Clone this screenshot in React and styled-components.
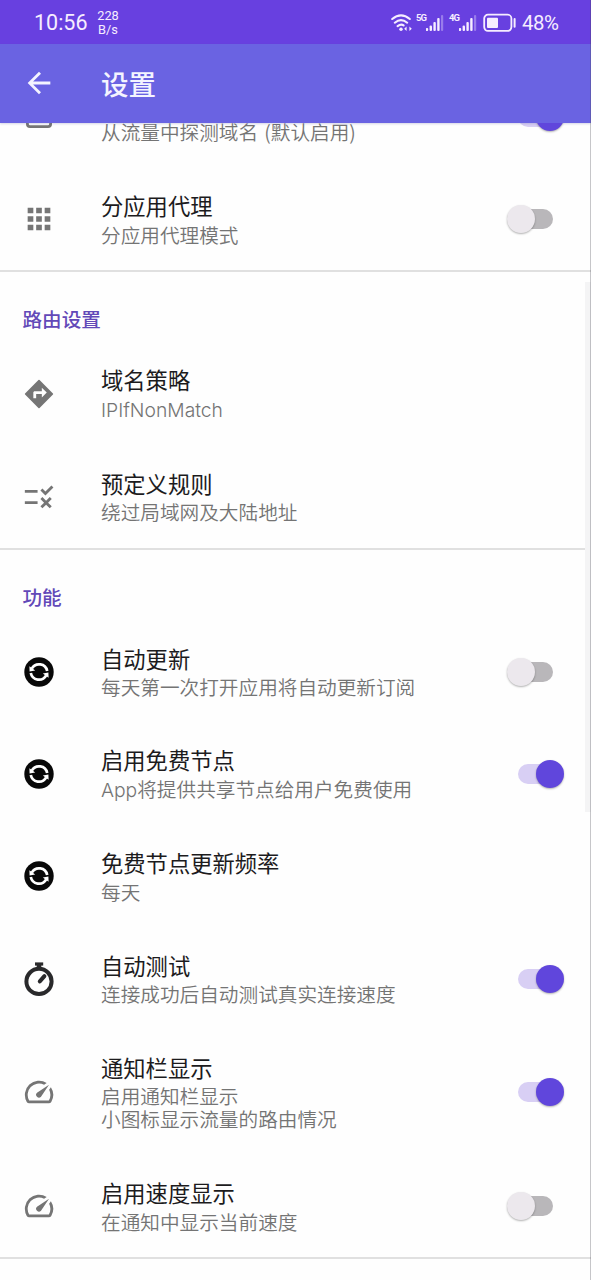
import React from "react";
import styled, { createGlobalStyle, css } from "styled-components";
import { MdApps, MdArrowBack, MdRule, MdSpeed } from "react-icons/md";

const Global = createGlobalStyle`
  * { box-sizing: border-box; }
  body { margin: 0; background: #fefefe; font-family: "Noto Sans CJK SC", sans-serif; overflow: hidden; }
  svg { display: block; }
`;

const Screen = styled.div`
  position: relative;
  width: 591px;
  height: 1280px;
  display: flex;
  flex-direction: column;
  overflow: hidden;
  background: #fefefe;
`;

const StatusBar = styled.header`
  flex: none;
  height: 44px;
  padding: 2px 31px 0 34px;
  display: flex;
  align-items: center;
  background: #6840e0;
  color: #f6edff;
  font-family: Roboto, sans-serif;
`;

const Clock = styled.span`
  width: 62px;
  font-size: 21.5px;
  line-height: 26px;
  white-space: nowrap;
`;

const NetSpeed = styled.span`
  width: 24px;
  display: flex;
  flex-direction: column;
  align-items: center;
  font-size: 12.8px;
  line-height: 14.5px;
`;

const StatusIcons = styled.div`
  margin-left: auto;
  display: flex;
  align-items: center;
`;

const BatteryText = styled.span`
  margin-left: 5px;
  width: 38px;
  font-size: 20.4px;
  letter-spacing: -0.4px;
  white-space: nowrap;
`;

const AppBar = styled.div`
  flex: none;
  height: 78.5px;
  padding-left: 22px;
  display: flex;
  align-items: center;
  gap: 45px;
  background: #6a63e2;
  color: #f4f4ff;
  box-shadow: 0 1px 2px rgba(90, 90, 160, 0.25);
  z-index: 1;
`;

const AppTitle = styled.h1`
  margin: 0;
  font-size: 27.5px;
  line-height: 40px;
  font-weight: 500;
`;

const Viewport = styled.main`
  flex: 1;
  min-height: 0;
  overflow: hidden;
`;

const List = styled.div`
  margin-top: -56.8px;
`;

const Group = styled.section`
  border-bottom: 2px solid #e0e0e0;
`;

const GroupTitle = styled.h2`
  margin: 0;
  height: 71px;
  padding: 24px 0 0 22.5px;
  font-size: 19.6px;
  line-height: 46px;
  font-weight: 500;
  color: #6249b8;
`;

const Row = styled.div`
  height: ${(p) => (p.$tall ? 125.4 : 102.25)}px;
  padding: 0 27.5px 0 22px;
  display: flex;
  align-items: center;
`;

const IconSlot = styled.div`
  flex: none;
  width: 79px;
  color: #757575;
`;

const Texts = styled.div`
  flex: 1;
  padding-bottom: 2.4px;
  display: flex;
  flex-direction: column;
  gap: 2.5px;
  white-space: nowrap;
`;

const Title = styled.div`
  min-height: 30px;
  font-size: 22.3px;
  line-height: 30px;
  color: #1c1b1d;
`;

const Summary = styled.div`
  font-size: 19.65px;
  line-height: 23px;
  font-weight: 350;
  color: #747474;
  word-spacing: 1.8px;
  white-space: pre-line;
`;

const Latin = styled.span`
  font-family: Inter, sans-serif;
  font-weight: 300;
  font-size: 19.3px;
`;

const Toggle = styled.div`
  flex: none;
  width: ${(p) => (p.$on ? 46 : 56.5)}px;
  height: 28px;
  display: flex;
  align-items: center;

  &::before {
    content: "";
    width: 28px;
    height: 28px;
    border-radius: 50%;
    background: #ece8ed;
    box-shadow: 0 1px 2px rgba(0, 0, 0, 0.3);
    z-index: 1;
  }

  &::after {
    content: "";
    width: 32px;
    height: 20px;
    margin-left: -14px;
    border-radius: 10px;
    background: #b9b7ba;
  }

  ${(p) =>
    p.$on &&
    css`
      flex-direction: row-reverse;

      &::before {
        background: #6046dc;
      }

      &::after {
        margin: 0 -14px 0 0;
        background: #d8cff4;
      }
    `}
`;

const ScrollThumb = styled.div`
  position: absolute;
  top: 282px;
  right: 0;
  width: 6px;
  height: 530px;
  background: #f4f4f5;
`;

const ScreenEdge = styled.div`
  position: absolute;
  inset: 0 0 0 auto;
  width: 1px;
  background: rgba(70, 70, 80, 0.3);
  z-index: 2;
`;

const Wifi = () => (
  <svg width="21" height="20" viewBox="0 0 21 20" fill="none" stroke="currentColor" strokeWidth="2.1" strokeLinecap="round">
    <path d="M1.2 6Q10 -1.4 18.8 6M3.8 9.7Q10 4.6 16.2 9.7M6.6 13.2Q10 10.6 12.6 12.4" />
    <circle cx="10" cy="16.3" r="1.7" fill="currentColor" stroke="none" />
    <path d="M13.2 15.8l2.4-2.3v4.6zM20.8 15.8l-2.4-2.3v4.6z" fill="currentColor" stroke="none" />
  </svg>
);

const SignalWrap = styled.div`
  display: flex;
  margin-left: ${(p) => p.$gap}px;
`;

const SignalLabel = styled.span`
  width: 10px;
  font-size: 9.5px;
  line-height: 7px;
  font-weight: 700;
  letter-spacing: -1px;
`;

const Signal = ({ label, gap }) => (
  <SignalWrap $gap={gap}>
    <SignalLabel>{label}</SignalLabel>
    <svg width="18" height="18" viewBox="0 0 18 18" fill="currentColor">
      <rect x="-.2" y="14" width="2.4" height="3" rx="1" />
      <rect x="3.6" y="11.5" width="2.4" height="5.5" rx="1" />
      <rect x="7.4" y="8" width="2.4" height="9" rx="1" />
      <rect x="11.2" y="4" width="2.4" height="13" rx="1" />
      <rect x="15" y="1" width="2.2" height="16" rx="1" opacity=".35" />
    </svg>
  </SignalWrap>
);

const BatterySvg = styled.svg`
  margin-left: 6px;
`;

const Battery = () => (
  <BatterySvg width="34" height="20" viewBox="0 0 34 20">
    <rect x="1.2" y="1.7" width="27.2" height="16.2" rx="3.8" fill="none" stroke="currentColor" strokeWidth="1.8" />
    <rect x="4" y="4.7" width="11" height="10.3" rx="1" fill="currentColor" />
    <path d="M31.6 6v7.8" stroke="currentColor" strokeWidth="2" strokeLinecap="round" />
  </BatterySvg>
);

const DirectionsIcon = () => (
  <svg width="34" height="34" viewBox="0 0 24 24" fill="currentColor">
    <path d="M21.85 11.6L12.4 2.15a.57.57 0 0 0-.8 0L2.15 11.6a.57.57 0 0 0 0 .8l9.45 9.45a.57.57 0 0 0 .8 0l9.45-9.45a.57.57 0 0 0 0-.8zM14 14.5V12h-4v3H8v-4c0-.55.45-1 1-1h5V7.5l3.5 3.5-3.5 3.5z" />
  </svg>
);

const SyncIcon = () => (
  <svg width="34" height="34" viewBox="0 0 34 34">
    <circle cx="17" cy="17" r="14.7" fill="#080808" />
    <g fill="none" stroke="#fff" strokeWidth="2.7">
      <path d="M9.8 13.6A8.3 8.3 0 0 1 25.2 16" />
      <path d="M24.2 20.4A8.3 8.3 0 0 1 8.8 18" />
    </g>
    <path d="M7.4 11.2l.2 5.2 5.6-1zM26.6 22.8l-.2-5.2-5.6 1z" fill="#fff" />
  </svg>
);

const StopwatchIcon = () => (
  <svg width="34" height="36" viewBox="0 0 34 36" fill="none" stroke="#29292b">
    <circle cx="17" cy="20.4" r="12.6" strokeWidth="4" />
    <path d="M13 3h8.2" strokeWidth="3.2" />
    <path d="M17 3v5" strokeWidth="4.6" />
    <path d="M17.8 20.4l4.6-5.2" strokeWidth="4" strokeLinecap="round" />
  </svg>
);

const SniffIcon = () => (
  <svg width="34" height="34" viewBox="0 0 34 34" fill="none" stroke="currentColor" strokeWidth="2.8">
    <rect x="5.4" y="6" width="23.2" height="20.6" rx="2.6" />
  </svg>
);

const Item = ({ icon, title, summary, toggle, tall }) => (
  <Row $tall={tall}>
    <IconSlot>{icon}</IconSlot>
    <Texts>
      <Title>{title}</Title>
      <Summary>{summary}</Summary>
    </Texts>
    {toggle !== undefined && <Toggle $on={toggle} role="switch" aria-checked={toggle} />}
  </Row>
);

export default function App() {
  return (
    <Screen>
      <Global />
      <StatusBar>
        <Clock>10:56</Clock>
        <NetSpeed>
          <span>228</span>
          <span>B/s</span>
        </NetSpeed>
        <StatusIcons>
          <Wifi />
          <Signal label="5G" gap={4} />
          <Signal label="4G" gap={5} />
          <Battery />
          <BatteryText>48%</BatteryText>
        </StatusIcons>
      </StatusBar>
      <AppBar>
        <MdArrowBack size={34} />
        <AppTitle>设置</AppTitle>
      </AppBar>
      <Viewport>
        <List>
          <Group>
            <Item icon={<SniffIcon />} summary="从流量中探测域名 (默认启用)" toggle={true} />
            <Item icon={<MdApps size={34} />} title="分应用代理" summary="分应用代理模式" toggle={false} />
          </Group>
          <Group>
            <GroupTitle>路由设置</GroupTitle>
            <Item icon={<DirectionsIcon />} title="域名策略" summary={<Latin>IPIfNonMatch</Latin>} />
            <Item icon={<MdRule size={34} />} title="预定义规则" summary="绕过局域网及大陆地址" />
          </Group>
          <Group>
            <GroupTitle>功能</GroupTitle>
            <Item icon={<SyncIcon />} title="自动更新" summary="每天第一次打开应用将自动更新订阅" toggle={false} />
            <Item
              icon={<SyncIcon />}
              title="启用免费节点"
              summary={<><Latin>App</Latin>将提供共享节点给用户免费使用</>}
              toggle={true}
            />
            <Item icon={<SyncIcon />} title="免费节点更新频率" summary="每天" />
            <Item icon={<StopwatchIcon />} title="自动测试" summary="连接成功后自动测试真实连接速度" toggle={true} />
            <Item
              icon={<MdSpeed size={34} />}
              title="通知栏显示"
              summary={"启用通知栏显示\n小图标显示流量的路由情况"}
              toggle={true}
              tall
            />
            <Item icon={<MdSpeed size={34} />} title="启用速度显示" summary="在通知中显示当前速度" toggle={false} />
          </Group>
        </List>
      </Viewport>
      <ScrollThumb />
      <ScreenEdge />
    </Screen>
  );
}
